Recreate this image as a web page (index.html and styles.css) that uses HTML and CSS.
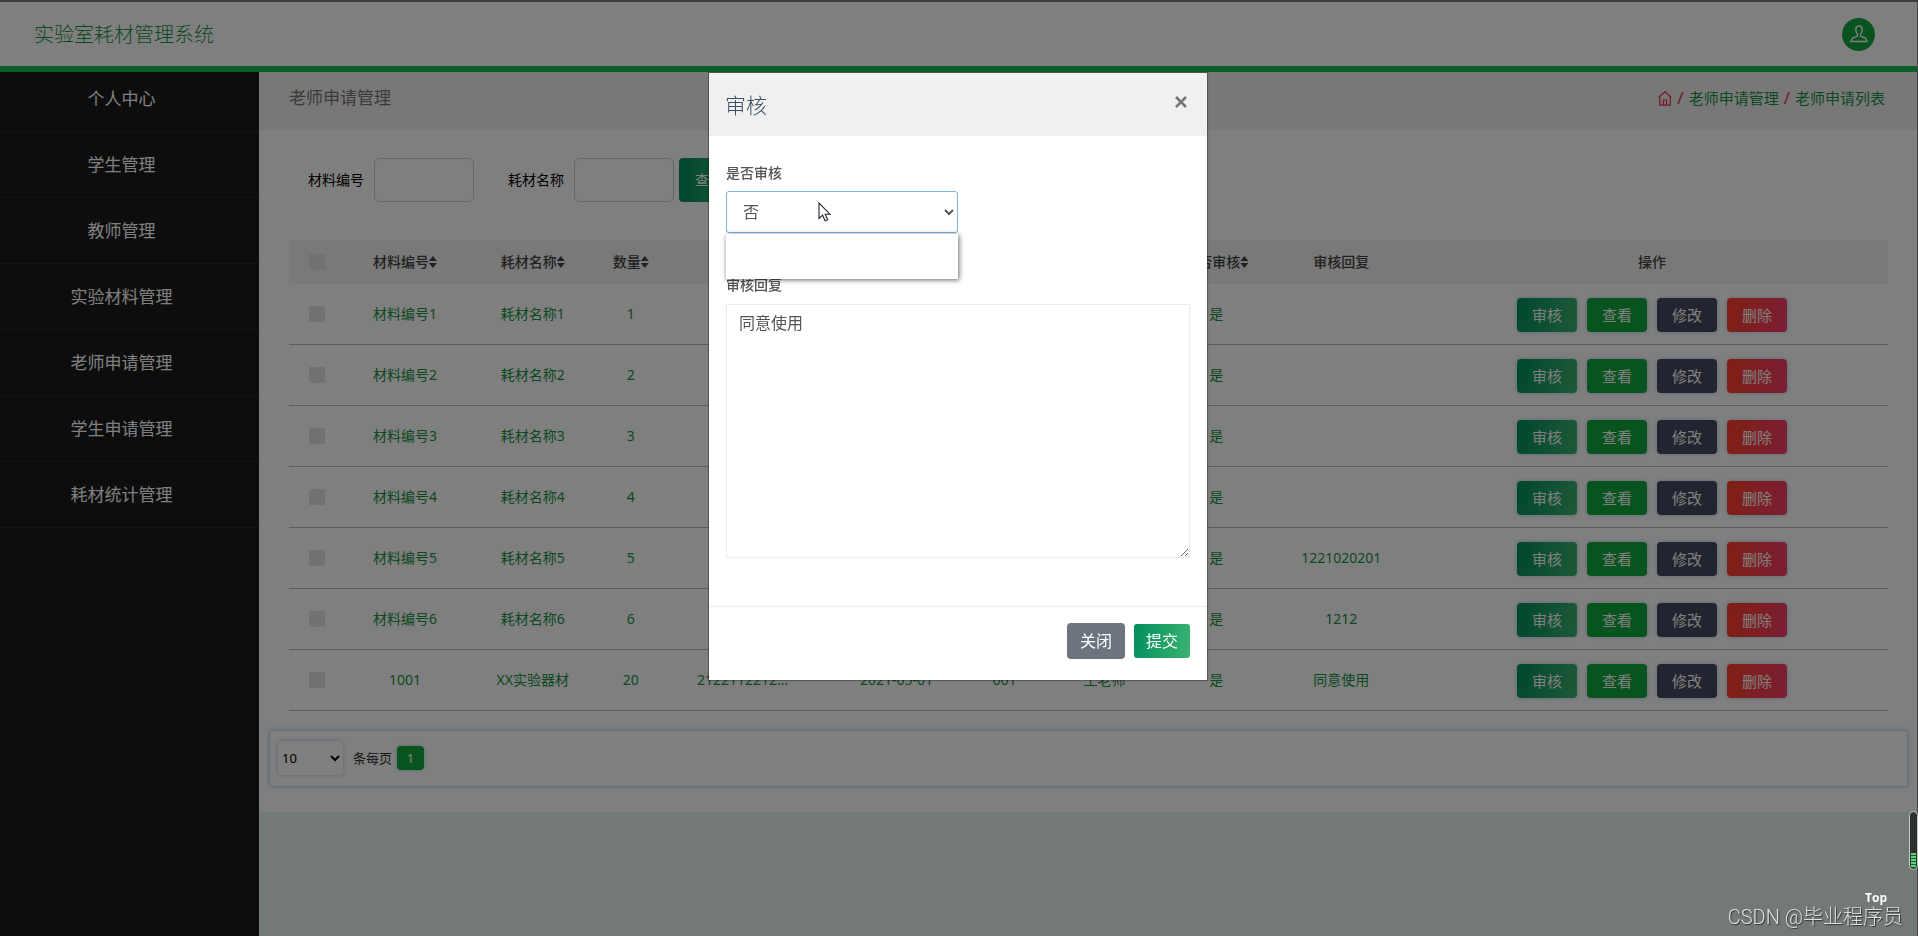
FILE: index.html
```html
<!DOCTYPE html>
<html lang="zh-CN">
<head>
<meta charset="utf-8">
<title>实验室耗材管理系统</title>
<link rel="stylesheet" href="styles.css">
</head>
<body>
<header class="topbar">
  <h1 class="brand">实验室耗材管理系统</h1>
  <button class="avatar" type="button" aria-label="用户">
    <svg viewBox="0 0 18 18" width="18" height="18" fill="none" stroke="#fff" stroke-width="1.4" stroke-linejoin="round"><path d="M9 1C6.700 1 5.800 2.500 5.800 4.600c0 2 .5 3.500 1.700 4.600v2L2.600 13 .8 16.500h16.400L15.400 13l-4.900-1.800v-2c1.200-1.100 1.700-2.600 1.700-4.600C12.200 2.500 11.300 1 9 1z"/></svg>
  </button>
</header>
<div class="layout">
  <nav class="sidebar">
    <a class="side-link" href="#">个人中心</a>
    <a class="side-link" href="#">学生管理</a>
    <a class="side-link" href="#">教师管理</a>
    <a class="side-link" href="#">实验材料管理</a>
    <a class="side-link" href="#">老师申请管理</a>
    <a class="side-link" href="#">学生申请管理</a>
    <a class="side-link" href="#">耗材统计管理</a>
  </nav>
  <main class="content">
    <div class="page-head">
      <h2 class="page-title">老师申请管理</h2>
      <div class="crumbs">
        <a class="home" href="#" aria-label="首页"><svg viewBox="0 0 14 15" width="14" height="15" fill="none" stroke="#e8304a" stroke-width="1.2"><path d="M.7 6.200 7 .9l6.300 5.300M1.800 5.400v8.800h10.400V5.400M5.500 14V9h3v5"/></svg></a>
        <span class="slash">/</span><a href="#">老师申请管理</a><span class="slash">/</span><a href="#">老师申请列表</a>
      </div>
    </div>
    <div class="panel">
      <form class="search">
        <label class="field">材料编号<input class="search-input" type="text"></label>
        <label class="field">耗材名称<input class="search-input" type="text"></label>
        <button class="search-btn" type="button">查询</button>
      </form>
      <table class="grid">
        <colgroup><col class="c-check"><col class="c-code"><col class="c-name"><col class="c-qty"><col class="c-use"><col class="c-date"><col class="c-no"><col class="c-teacher"><col class="c-state"><col class="c-reply"><col></colgroup>
        <thead><tr>
          <th><input class="tick" type="checkbox" aria-label="全选"></th>
          <th>材料编号<i class="sort"></i></th><th>耗材名称<i class="sort"></i></th><th>数量<i class="sort"></i></th><th>用途<i class="sort"></i></th><th>日期<i class="sort"></i></th><th>工号<i class="sort"></i></th><th>姓名<i class="sort"></i></th><th>是否审核<i class="sort"></i></th><th>审核回复</th><th class="ops">操作</th>
        </tr></thead>
        <tbody id="rows"></tbody>
      </table>
      <div class="pager">
        <select class="page-size" id="size"><option>10</option></select>
        <label class="pager-label" for="size">条每页</label>
        <button class="page-no" type="button">1</button>
      </div>
    </div>
  </main>
</div>

<div class="backdrop">
  <section class="modal" role="dialog" aria-labelledby="modal-title">
    <header class="modal-head">
      <h3 class="modal-title" id="modal-title">审核</h3>
      <button class="close" type="button" aria-label="关闭"><svg viewBox="0 0 12 12" width="12" height="12" stroke="#777" stroke-width="2.600"><path d="M1 1l10 10M11 1 1 11"/></svg></button>
    </header>
    <div class="modal-body">
      <label class="form-label" for="state">是否审核</label>
      <div class="select-wrap">
        <select class="state" id="state"><option>否</option></select>
        <div class="options"></div>
        <svg class="pointer" viewBox="0 0 13 20" width="13" height="20"><path d="M1 1v15.500l3.600-3.300 2.500 5.600 2.600-1.100-2.500-5.500H12z" fill="#fff" stroke="#223" stroke-width="1.100"/></svg>
      </div>
      <label class="form-label" for="reply">审核回复</label>
      <textarea class="reply" id="reply">同意使用</textarea>
    </div>
    <footer class="modal-foot">
      <button class="btn-close" type="button">关闭</button>
      <button class="btn-submit" type="button">提交</button>
    </footer>
  </section>
</div>
<div class="meter"><div class="meter-fill"></div></div>
<div class="corner"><a class="to-top" href="#">Top</a><span class="watermark">CSDN @毕业程序员</span></div>
<script src="app.js"></script>
</body>
</html>
```
FILE: styles.css
```css
* { box-sizing: border-box; }
body {
  margin: 0;
  min-height: 100vh;
  display: flex;
  flex-direction: column;
  border-top: 2px solid #777;
  border-right: 1px solid #888;
  background: #e6f2ea;
  font-family: "Noto Sans", "Noto Sans CJK SC", sans-serif;
  font-size: 14px;
  line-height: 20px;
  color: #000;
}
button, input, select, textarea { font: inherit; }
button { border: 0; padding: 0; cursor: pointer; }
a { color: #189144; text-decoration: none; }
h1, h2, h3 { margin: 0; font-weight: 300; }

.topbar {
  display: flex;
  align-items: center;
  justify-content: space-between;
  height: 70px;
  padding: 0 42px 0 34px;
  background: #fff;
  border-bottom: 6px solid #1db954;
}
.brand { font-size: 20px; line-height: 28px; padding-top: 2px; color: #189144; }
.avatar {
  display: grid;
  place-items: center;
  width: 33px;
  height: 33px;
  border-radius: 50%;
  background: #12a63e;
}

.layout { display: flex; flex: 1; }
.sidebar { width: 259px; flex: none; background: #1a1a1a; }
.side-link {
  display: block;
  height: 66px;
  line-height: 65px;
  padding-right: 16px;
  border-bottom: 1px solid #2a2a2a;
  text-align: center;
  font-size: 17px;
  color: #fff;
}
.side-link:first-child { height: 60px; line-height: 53px; }

.content { flex: 1; min-width: 0; }
.page-head {
  display: flex;
  align-items: center;
  justify-content: space-between;
  height: 58px;
  padding: 0 32px 6px 30px;
  background: #f0f0f0;
}
.page-title { font-size: 17px; color: #777; font-weight: 400; }
.crumbs { display: flex; align-items: center; gap: 5px; font-size: 15px; }
.home { display: flex; }
.slash { color: #e8304a; font-size: 17px; }

.panel { background: #fff; padding: 28px 9px 25px 10px; }
.search { display: flex; align-items: center; margin: 0 0 38px 39px; }
.field { display: flex; align-items: center; gap: 10px; margin-right: 34px; }
.field:nth-child(2) { margin-right: 5px; }
.search-input { width: 100px; height: 44px; padding: 0 10px; border: 1px solid #ccc; border-radius: 6px; background: #fff; }
.search-btn { width: 60px; height: 44px; border-radius: 4px; color: #fff; background: linear-gradient(90deg, #008f5d, #3cb371); }

.grid { width: calc(100% - 40px); margin: 0 20px; border-collapse: separate; border-spacing: 0; table-layout: fixed; text-align: center; }
.c-check { width: 3.5%; }
.c-code { width: 7.5%; }
.c-name { width: 8.5%; }
.c-qty { width: 3.75%; }
.c-use { width: 10.25%; }
.c-date { width: 9%; }
.c-no { width: 4.5%; }
.c-teacher { width: 8%; }
.c-state { width: 6%; }
.c-reply { width: 9.625%; }
.grid th { height: 44px; padding: 0; background: #f2f2f2; color: #444; font-weight: 500; white-space: nowrap; }
.grid td { height: 61px; padding: 0; border-bottom: 1px solid #bbb; color: #189144; white-space: nowrap; }
.grid .ops { padding-right: 2px; }
.tick { appearance: none; display: block; width: 16px; height: 16px; margin: 0 auto; background: #e4e4e8; }
.sort { display: inline-block; width: 8px; height: 12px; vertical-align: -1px; background: #444; clip-path: polygon(50% 0, 100% 42%, 0 42%, 0 58%, 100% 58%, 50% 100%, 0 58%, 0 42%); }
.actions { display: flex; justify-content: center; gap: 10px; padding: 2px 2px 0 0; }
.act { width: 60px; height: 34px; border-radius: 4px; color: #fff; font-size: 15px; box-shadow: 0 0 5px #bcd4ea; }
.act-audit { background: linear-gradient(100deg, #008f5d, #3cb371); }
.act-view { background: #12a63e; }
.act-edit { background: #454a5e; }
.act-del { background: linear-gradient(100deg, #ff4026, #f83c6c); }

.pager {
  display: flex;
  align-items: center;
  height: 57px;
  margin-top: 19px;
  padding: 0 8px 2px;
  border: 1px solid #c8dcf0;
  border-radius: 2px;
  box-shadow: 0 0 6px #c4daf0;
  font-size: 13px;
}
.page-size { width: 65px; height: 34px; border: 0; border-radius: 4px; background: #fff; box-shadow: 0 0 5px #b4cce4; }
.pager-label { margin: 0 5px 0 10px; color: #333; }
.page-no { width: 27px; height: 24px; border-radius: 4px; color: #fff; background: #12a63e; box-shadow: 0 0 4px #a8d8d0; }

.backdrop { position: fixed; inset: 0; padding: 73px 2px 0 0; background: rgba(0, 0, 0, .5); }
.modal { width: 498px; margin: 0 auto; background: #fff; box-shadow: 0 0 1px 1px rgba(0, 0, 0, .3); }
.modal-head { display: flex; justify-content: space-between; align-items: center; height: 63px; padding: 0 20px 0 16px; background: #f0f0f0; }
.modal-title { font-size: 21px; line-height: 28px; color: #3c5064; }
.close { display: grid; place-items: center; width: 12px; height: 24px; margin-bottom: 5px; background: none; }
.modal-body { padding: 26px 17px 48px; }
.form-label { display: block; line-height: 22px; font-weight: 500; color: #555; }
.select-wrap { position: relative; width: 232px; margin: 7px 0 41px; }
.state { display: block; width: 232px; height: 42px; padding: 0 0 0 12px; border: 1px solid #80b4e4; border-radius: 3px; background: #fff; color: #555; font-size: 16px; }
.options { position: absolute; top: 43px; left: 0; width: 232px; height: 45px; background: #fff; box-shadow: 1px 1px 5px rgba(0, 0, 0, .6); }
.pointer { position: absolute; left: 92px; top: 11px; }
.reply { display: block; width: 100%; height: 254px; margin-top: 8px; padding: 6px 12px; border: 1px solid #e9ecef; color: #555; font-size: 16px; line-height: 24px; }
.modal-foot { display: flex; align-items: center; justify-content: flex-end; gap: 9px; height: 74px; padding: 0 17px 5px; border-top: 1px solid #e9ecef; font-size: 16px; color: #fff; }
.btn-close { width: 58px; height: 36px; border-radius: 4px; color: #fff; background: #6c757d; }
.btn-submit { width: 56px; height: 34px; border-radius: 3px; color: #fff; background: linear-gradient(100deg, #008f5d, #3cb371); }

.meter { position: fixed; right: 0; bottom: 66px; display: flex; align-items: flex-end; width: 9px; height: 59px; padding: 1px; border: 1px solid #c4c8c6; border-radius: 5px; background: #2c302e; }
.meter-fill { width: 100%; height: 15px; border-radius: 0 0 3px 3px; background: repeating-linear-gradient(#5ad37c 0 2px, #1d5c30 2px 3px); }
.corner { position: fixed; right: 15px; bottom: 9px; display: flex; flex-direction: column; align-items: flex-end; }
.to-top { margin-right: 16px; color: #fff; font: bold 12px/18px "Open Sans", sans-serif; }
.watermark { font: 20px/20px Roboto, "Noto Sans CJK SC", sans-serif; font-weight: 300; color: #dde0de; text-shadow: 1px 1px 1px #333; }
```
FILE: app.js
```js
const rows = [
  ["材料编号1", "耗材名称1", "1", "", "", "", "", "是", ""],
  ["材料编号2", "耗材名称2", "2", "", "", "", "", "是", ""],
  ["材料编号3", "耗材名称3", "3", "", "", "", "", "是", ""],
  ["材料编号4", "耗材名称4", "4", "", "", "", "", "是", ""],
  ["材料编号5", "耗材名称5", "5", "", "", "", "", "是", "1221020201"],
  ["材料编号6", "耗材名称6", "6", "", "", "", "", "是", "1212"],
  ["1001", "XX实验器材", "20", "2122112212...", "2021-05-01", "001", "王老师", "是", "同意使用"]
];
const actions = [["audit", "审核"], ["view", "查看"], ["edit", "修改"], ["del", "删除"]];
const buttons = actions.map(([kind, text]) => `<button class="act act-${kind}" type="button">${text}</button>`).join("");
document.getElementById("rows").innerHTML = rows.map(row =>
  `<tr><td><input class="tick" type="checkbox" aria-label="${row[0]}"></td>` +
  row.map(value => `<td>${value}</td>`).join("") +
  `<td><div class="actions">${buttons}</div></td></tr>`
).join("");
```
